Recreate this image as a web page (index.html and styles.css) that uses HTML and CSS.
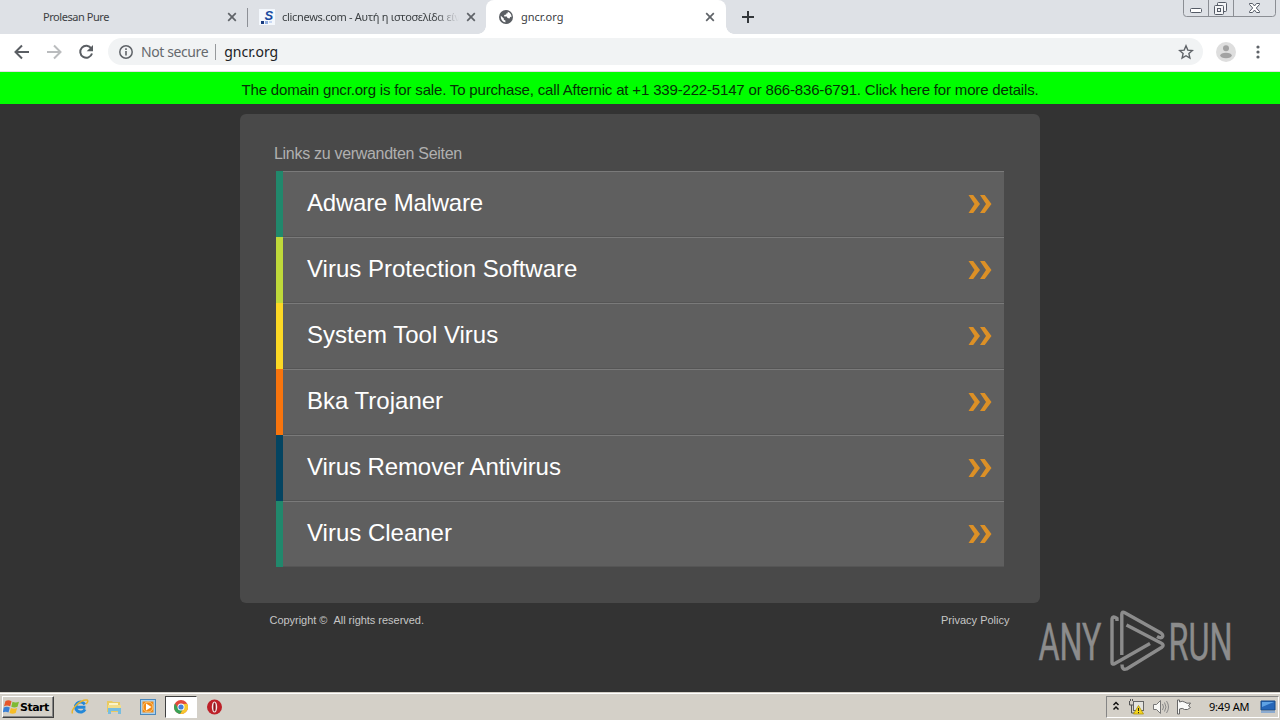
FILE: index.html
```
<!DOCTYPE html>
<html lang="de">
  <head>
    <meta charset="UTF-8" />
    <meta name="viewport" content="width=device-width, initial-scale=1.0" />
    <title>gncr.org</title>
    <link rel="stylesheet" href="styles.css">
  </head>
  <body>
    <div class="tabs">
      <div class="tab tab-first">
        <span class="tab-title title-prolesan">Prolesan Pure</span>
        <svg class="close" width="10" height="10" viewBox="0 0 10 10"><path d="M1.2 1.2l7.6 7.6M8.8 1.2L1.2 8.8" /></svg>
      </div>
      <div class="tab tab-second">
        <svg class="favicon" width="16" height="16" viewBox="0 0 16 16">
          <rect width="16" height="16" fill="#f4f8fd" />
          <text x="5.5" y="11" class="favicon-s">S</text>
          <rect x="2" y="12" width="3" height="3" fill="#173b80" />
          <rect x="6" y="12" width="3" height="3" fill="#8faee0" />
          <rect x="10" y="12" width="3" height="2" fill="#c8d8f2" />
        </svg>
        <span class="tab-title title-clic">clicnews.com - Αυτή η ιστοσελίδα είν</span>
        <svg class="close" width="10" height="10" viewBox="0 0 10 10"><path d="M1.2 1.2l7.6 7.6M8.8 1.2L1.2 8.8" /></svg>
      </div>
      <div class="tab tab-active">
        <svg class="favicon" width="14" height="14" viewBox="0 0 14 14">
          <circle cx="7" cy="7" r="7" fill="#5a5e63" />
          <path d="M1.8 5.8l3 2.6v1.4l1.6.8v1.8C3.600 12 1.500 9.500 1.800 5.800z" fill="#fff" />
          <path d="M8.600 1.700c3 1 4 3.200 3.900 5.600l-1.200-.5-.8 1.600-2-.3-.7-1.600H5.200V5l2-.4.3-1.400h1.300z" fill="#fff" />
        </svg>
        <span class="tab-title title-gncr">gncr.org</span>
        <svg class="close" width="10" height="10" viewBox="0 0 10 10"><path d="M1.2 1.2l7.6 7.6M8.8 1.2L1.2 8.8" /></svg>
      </div>
      <svg class="new-tab" width="12" height="12" viewBox="0 0 12 12"><path d="M6 0v12M0 6h12" /></svg>
      <svg class="window-buttons" width="94" height="18" viewBox="0 0 94 18">
        <path d="M.5 0v13.500q0 3 3 3h86q3 0 3-3V0M25.500 0v16M50.500 0v16" fill="none" stroke="#8b8e94" />
        <rect x="7.500" y="8.500" width="11" height="4" rx="1" fill="#fff" stroke="#555b66" />
        <g fill="#f4f5f7" stroke="#555b66">
          <rect x="34.500" y="2.500" width="9" height="9" rx="1" />
          <rect x="31.500" y="5.500" width="9" height="9" rx="1" />
          <rect x="34.500" y="8.500" width="3" height="3" />
        </g>
        <path d="M66.500 3.500h3l2 2.500 2-2.500h3v1l-3.200 3.500 3.200 3.500v1h-3l-2-2.500-2 2.500h-3v-1l3.200-3.500-3.200-3.500z" fill="#fff" stroke="#555b66" />
      </svg>
    </div>

    <div class="toolbar">
      <svg class="nav" width="16" height="16" viewBox="0 0 16 16"><path d="M15 8H2M8 1.500L1.500 8 8 14.500" /></svg>
      <svg class="nav nav-off" width="16" height="16" viewBox="0 0 16 16"><path d="M1 8h13M8 1.500L14.500 8 8 14.500" /></svg>
      <svg class="nav" width="16" height="16" viewBox="0 0 16 16"><path d="M13.300 4.500A6 6 0 1 0 14 9.500" /><path class="nav-tip" d="M15 1v6.300H8.700z" /></svg>
      <div class="address">
        <svg width="14" height="14" viewBox="0 0 14 14">
          <circle cx="7" cy="7" r="6.200" fill="none" stroke="#5f6368" stroke-width="1.500" />
          <path d="M7 6v4.500M7 3.300v1.600" stroke="#5f6368" stroke-width="1.600" />
        </svg>
        <span class="not-secure">Not secure</span>
        <span class="address-line"></span>
        <span class="url">gncr.org</span>
        <svg class="star" width="16" height="16" viewBox="0 0 16 16"><path d="M8 1.800l1.800 4.300 4.600.4-3.500 3.100 1 4.500L8 11.700l-3.900 2.400 1-4.500L1.600 6.500l4.600-.4z" /></svg>
      </div>
      <svg class="avatar" width="20" height="20" viewBox="0 0 20 20">
        <circle cx="10" cy="10" r="10" fill="#dedede" />
        <circle cx="10" cy="6.200" r="3" fill="#a2a2a2" />
        <ellipse cx="10" cy="13.500" rx="5.800" ry="2.800" fill="#a2a2a2" />
      </svg>
      <svg class="dots" width="4" height="14" viewBox="0 0 4 14">
        <circle cx="2" cy="2" r="1.600" /><circle cx="2" cy="7" r="1.600" /><circle cx="2" cy="12" r="1.600" />
      </svg>
    </div>

    <a class="sale-banner"><span>The domain gncr.org is for sale. To purchase, call Afternic at +1 339-222-5147 or 866-836-6791. Click here for more details.</span></a>

    <div class="page">
      <div class="card">
        <h2><span>Links zu verwandten Seiten</span></h2>
        <ul class="links">
          <li class="green"><span class="tight">Adware Malware</span><svg class="arrows" width="24" height="20" viewBox="0 0 24 20"><path d="M.5 1h4.700L12 10l-6.800 9H.5L6.500 10zM12 1h4.700l6.800 9-6.800 9H12l6-9z" /></svg></li>
          <li class="lime"><span>Virus Protection Software</span><svg class="arrows" width="24" height="20" viewBox="0 0 24 20"><path d="M.5 1h4.700L12 10l-6.800 9H.5L6.500 10zM12 1h4.700l6.800 9-6.800 9H12l6-9z" /></svg></li>
          <li class="yellow"><span>System Tool Virus</span><svg class="arrows" width="24" height="20" viewBox="0 0 24 20"><path d="M.5 1h4.700L12 10l-6.800 9H.5L6.500 10zM12 1h4.700l6.800 9-6.800 9H12l6-9z" /></svg></li>
          <li class="orange"><span>Bka Trojaner</span><svg class="arrows" width="24" height="20" viewBox="0 0 24 20"><path d="M.5 1h4.700L12 10l-6.800 9H.5L6.500 10zM12 1h4.700l6.800 9-6.800 9H12l6-9z" /></svg></li>
          <li class="blue"><span>Virus Remover Antivirus</span><svg class="arrows" width="24" height="20" viewBox="0 0 24 20"><path d="M.5 1h4.700L12 10l-6.800 9H.5L6.500 10zM12 1h4.700l6.800 9-6.800 9H12l6-9z" /></svg></li>
          <li class="green"><span>Virus Cleaner</span><svg class="arrows" width="24" height="20" viewBox="0 0 24 20"><path d="M.5 1h4.700L12 10l-6.800 9H.5L6.500 10zM12 1h4.700l6.800 9-6.800 9H12l6-9z" /></svg></li>
        </ul>
      </div>
      <div class="footer">
        <span class="copyright">Copyright © &nbsp;All rights reserved.</span>
        <span class="privacy">Privacy Policy</span>
      </div>
      <svg class="watermark" width="230" height="80" viewBox="0 0 230 80">
        <text x="3.500" y="53.500" textLength="63" lengthAdjust="spacingAndGlyphs">ANY</text>
        <text x="133.500" y="53.500" textLength="64" lengthAdjust="spacingAndGlyphs">RUN</text>
        <g fill="none" stroke="#8c8c8c" stroke-width="3.400" stroke-linejoin="round">
          <path d="M82 15v-2.500q-5-3.500-5 1.500v42.500q0 2.500 2.500 1.200L115 37.500" />
          <path d="M86.800 49V8.500q0-3.500 3-1.800L126 27q3 2.500 1 4.300-1.500 1.200-5-.8" />
          <path d="M91.500 19l34.500 18q4 2 .5 4.500L91.500 63q-4.500 1.500-4.500-4.500" />
        </g>
      </svg>
    </div>

    <div class="taskbar">
      <div class="start">
        <svg width="17" height="16" viewBox="0 0 17 16">
          <path d="M2.500 2q3-1.500 6 .2L7.200 7.300Q4 5.800 1 7.300z" fill="#e8572a" />
          <path d="M9.500 2.700q3 1.500 6.500 0l-1.500 5q-3 1.500-6.200 0z" fill="#7fba34" />
          <path d="M.8 8.500q3-1.400 6 0l-1.300 5Q2.500 12-.3 13.500z" fill="#3b80d5" />
          <path d="M7.900 8.900q3 1.500 6.200.1l-1.400 5q-3.200 1.400-6.200 0z" fill="#f7bd26" />
        </svg>
        <span>Start</span>
      </div>
      <svg class="task" width="18" height="18" viewBox="0 0 18 18">
        <path d="M13.800 6.500a5 5 0 1 0 .2 4.800M4.800 9.300h9.600" fill="none" stroke="#2488d8" stroke-width="3" />
        <path d="M1.500 15.500C-.5 11 10 1 16 2q2 1-1 4" fill="none" stroke="#e9b52d" stroke-width="1.500" />
      </svg>
      <svg class="task" width="18" height="18" viewBox="0 0 18 18">
        <path d="M2 3h5l1 1h7v10H2z" fill="#e9ca62" />
        <path d="M4 5h9v6H4z" fill="#fbf4c8" /><path d="M3 7h13v5H3z" fill="#f2dd8b" />
        <path d="M3 10h13v6h-3v-3H6v3H3z" fill="#77bde0" />
      </svg>
      <svg class="task" width="18" height="18" viewBox="0 0 18 18">
        <rect x="1.500" y="1.500" width="15" height="15" fill="#a8d0ee" stroke="#4a88bd" />
        <rect x="3.500" y="3.500" width="11" height="11" fill="#f18a16" />
        <circle cx="9" cy="9" r="5" fill="#f18a16" stroke="#fbc77c" /><path d="M7 5.500v7L12.500 9z" fill="#fff" />
      </svg>
      <div class="task-active">
        <svg width="14" height="14" viewBox="0 0 14 14">
          <circle cx="7" cy="7" r="7" fill="#e2493b" />
          <path d="M1 3.500A7 7 0 0 0 6.200 14L9.500 8.500 4 8z" fill="#38a256" />
          <path d="M13.100 3.700A7 7 0 0 1 6.200 14L9.800 8 9 4z" fill="#f7c72d" />
          <circle cx="7" cy="7" r="3.500" fill="#fff" /><circle cx="7" cy="7" r="2.600" fill="#447fda" />
        </svg>
      </div>
      <svg class="task" width="18" height="18" viewBox="0 0 18 18">
        <circle cx="9.500" cy="9" r="7.500" fill="#bd2028" />
        <ellipse cx="9.500" cy="9" rx="2.700" ry="5.500" fill="#f5eaea" /><ellipse cx="9.500" cy="9" rx="1.200" ry="4.500" fill="#8e151c" />
      </svg>
      <div class="tray">
        <svg width="8" height="12" viewBox="0 0 8 12"><path d="M1.500 4L4 1.500 6.500 4M1.500 8.500L4 6l2.500 2.500" fill="none" stroke="#111" stroke-width="1.500" /></svg>
        <svg class="tray-net" width="17" height="16" viewBox="0 0 17 16">
          <path d="M1.500 2v4h4V2M3.500 6v8h3M2.500 0v2M4.500 0v2" fill="none" stroke="#555" />
          <rect x="5.500" y="2.500" width="10" height="9" fill="#e3e3df" stroke="#666" />
          <path d="M10.500 6.500l5 8.500h-10z" fill="#f4d51e" stroke="#a88d00" stroke-width=".7" /><path d="M10.500 9v3M10.500 13v1.200" stroke="#222" />
        </svg>
        <svg class="tray-sound" width="17" height="16" viewBox="0 0 17 16">
          <path d="M1.500 5.500h3l4-4v13l-4-4h-3z" fill="#f8f8f6" stroke="#777" />
          <path d="M10.500 5q2 3 0 6M12.500 3.500q3 4.500 0 9M14.500 2q4 6 0 12" fill="none" stroke="#888" />
        </svg>
        <svg class="tray-flag" width="17" height="16" viewBox="0 0 17 16">
          <path d="M1.500 1v14h2V10q3-1.500 5 .5 3 1 6-2l-2-1.500 2-3q-4 1-6-1-2-1.500-5 0V1z" fill="#fafaf8" stroke="#666" />
        </svg>
        <span class="clock">9:49 AM</span>
        <svg class="tray-desktop" width="16" height="14" viewBox="0 0 16 14">
          <path d="M1 1h14v9H1z" fill="#2566b8" stroke="#164a88" /><path d="M2 2h12L2 7z" fill="#5ea2e4" /><path d="M1 12h14" stroke="#8cabd0" stroke-width="2" />
        </svg>
      </div>
    </div>
  </body>
</html>
```
FILE: styles.css
```
body {
  display: flex;
  flex-direction: column;
  width: 1280px;
  height: 720px;
  margin: 0;
  overflow: hidden;
  background: #333333;
  font-family: "Liberation Sans", Arial, sans-serif;
}

svg {
  display: block;
  flex: none;
}

span {
  white-space: nowrap;
}

/* browser tabs */
.tabs {
  display: flex;
  height: 34px;
  background: #dee1e6;
}

.tab {
  display: flex;
  align-items: center;
  box-sizing: border-box;
  height: 34px;
}

.tab-first {
  width: 248px;
  padding: 0 11px 0 43px;
  background: linear-gradient(#8d9096, #8d9096) right 8px / 1px 19px no-repeat;
}

.tab-second {
  width: 238px;
  padding: 0 10px 0 11px;
}

.tab-active {
  position: relative;
  width: 240px;
  padding: 0 11px 0 13px;
  background: #fff;
  border-radius: 8px 8px 0 0;
}

/* curved feet of the active tab */
.tab-active::before,
.tab-active::after {
  content: "";
  position: absolute;
  bottom: 0;
  width: 8px;
  height: 8px;
}

.tab-active::before {
  left: -8px;
  background: radial-gradient(circle at 0 0, #dee1e6 7.5px, #fff 8px);
}

.tab-active::after {
  right: -8px;
  background: radial-gradient(circle at 100% 0, #dee1e6 7.5px, #fff 8px);
}

.tab-title {
  padding-bottom: 1px;
  font-family: "Noto Sans", sans-serif;
  font-size: 11px;
  color: #3c4043;
}

.title-prolesan {
  letter-spacing: -0.45px;
}

.tab-second .tab-title {
  width: 177px;
  margin-left: 7px;
  overflow: hidden;
  letter-spacing: -0.3px;
  -webkit-mask-image: linear-gradient(90deg, #000 86%, transparent);
}

.tab-active .tab-title {
  margin-left: 8px;
}

.favicon-s {
  font: italic bold 13px "Liberation Sans", sans-serif;
  fill: #174aa0;
}

.close {
  margin-left: auto;
  stroke: #5f6368;
  stroke-width: 1.7;
}

.new-tab {
  margin: 11px 0 0 16px;
  stroke: #33373b;
  stroke-width: 2;
}

.window-buttons {
  margin-left: auto;
  margin-right: 3px;
}

/* address bar */
.toolbar {
  display: flex;
  align-items: center;
  box-sizing: border-box;
  height: 38px;
  padding-left: 14px;
  padding-bottom: 2px;
  background: #fff;
  border-bottom: 1px solid #e4dfe4;
}

.nav {
  margin-right: 16px;
  fill: none;
  stroke: #5a5e63;
  stroke-width: 2;
}

.nav-off {
  stroke: #babcbe;
}

.nav-tip {
  fill: #5a5e63;
  stroke: none;
}

.address {
  display: flex;
  align-items: center;
  box-sizing: border-box;
  width: 1095px;
  height: 27px;
  margin-left: -2px;
  padding: 0 9px 0 11px;
  border-radius: 14px;
  background: #f1f3f4;
  font-family: "Noto Sans", sans-serif;
  font-size: 14px;
}

.not-secure {
  margin-left: 8px;
  color: #66696d;
  letter-spacing: -0.4px;
}

.address-line {
  width: 1px;
  height: 16px;
  margin: 0 8px 0 7px;
  background: #96999c;
}

.url {
  color: #202124;
}

.star {
  margin-left: auto;
  fill: none;
  stroke: #5f6368;
  stroke-width: 1.4;
}

.avatar {
  margin-left: 13px;
}

.dots {
  margin-left: 20px;
  fill: #5f6368;
}

.sale-banner {
  height: 32px;
  background: #00ff00;
  color: #063006;
  font-size: 15px;
  letter-spacing: -0.17px;
  line-height: 35px;
  text-align: center;
}

/* parked page */
.page {
  position: relative;
  height: 588px;
  padding-top: 10px;
  box-sizing: border-box;
}

.card {
  box-sizing: border-box;
  width: 800px;
  height: 489px;
  margin: 0 auto;
  padding: 29px 36px 0;
  border-radius: 6px;
  background: #494949;
}

.card h2 {
  height: 28px;
  margin: 0 0 0 -2px;
  color: #b0b0b0;
  font-size: 16px;
  font-weight: normal;
  letter-spacing: -0.3px;
  line-height: 22px;
}

.links {
  margin: 0;
  padding: 0;
  list-style: none;
}

.links li {
  display: flex;
  align-items: center;
  justify-content: space-between;
  box-sizing: border-box;
  height: 66px;
  padding: 0 12px 0 24px;
  border-left: 7px solid;
  background: linear-gradient(#7a7a7a 1px, #5f5f5f 1px, #5f5f5f 65px, #555555 65px);
}

.links span {
  padding-bottom: 2px;
  color: #fff;
  font-size: 24px;
}

.links .tight {
  letter-spacing: -0.2px;
}

.links .green {
  border-color: #21886c;
}

.links .lime {
  border-color: #bfd93a;
}

.links .yellow {
  border-color: #fcd824;
}

.links .orange {
  border-color: #f8740d;
}

.links .blue {
  border-color: #044461;
}

.links .blue span {
  letter-spacing: -0.08px;
}

.arrows {
  fill: #dc9026;
}

.footer {
  display: flex;
  justify-content: space-between;
  width: 741px;
  margin: 10px auto 0;
  color: #c6c6c6;
  font-size: 11px;
  line-height: 15px;
}

.copyright {
  letter-spacing: -0.03px;
}

.privacy {
  margin-right: 1px;
}

.watermark {
  position: absolute;
  left: 1035px;
  top: 502px;
}

.watermark text {
  fill: #8c8c8c;
  stroke: #8c8c8c;
  stroke-width: 0.5px;
  font-family: Roboto, sans-serif;
  font-size: 52px;
}

/* windows taskbar */
.taskbar {
  display: flex;
  align-items: center;
  box-sizing: border-box;
  height: 28px;
  padding: 1px 0 0 2px;
  border-top: 1px solid #d4d0c8;
  box-shadow: inset 0 1px #fff;
  background: #d4d0c8;
}

.start {
  display: flex;
  align-items: center;
  box-sizing: border-box;
  width: 52px;
  height: 22px;
  margin-right: 17px;
  border: 1px solid;
  border-color: #fff #404040 #404040 #fff;
  box-shadow: inset -1px -1px #858585;
  font-family: "DejaVu Sans", sans-serif;
  font-size: 11px;
  font-weight: bold;
  letter-spacing: -0.5px;
}

.task {
  margin-right: 16px;
}

.task-active {
  display: flex;
  align-items: center;
  justify-content: center;
  box-sizing: border-box;
  width: 32px;
  height: 22px;
  margin: 0 8px 0 -8px;
  border: 1px solid;
  border-color: #404040 #fff #fff #404040;
  background: #fff;
}

.tray {
  display: flex;
  align-items: center;
  box-sizing: border-box;
  width: 173px;
  height: 22px;
  margin-left: auto;
  margin-right: 1px;
  padding-left: 5px;
  border: 1px solid;
  border-color: #858585 #fff #fff #858585;
}

.tray-net {
  margin-left: 8px;
}

.tray-sound {
  margin-left: 7px;
}

.tray-flag {
  margin-left: 7px;
}

.clock {
  margin-left: 16px;
  padding-bottom: 1px;
  font-family: "Noto Sans", sans-serif;
  font-size: 11px;
  letter-spacing: -0.2px;
}

.tray-desktop {
  margin-left: auto;
  margin-right: 2px;
}
```
